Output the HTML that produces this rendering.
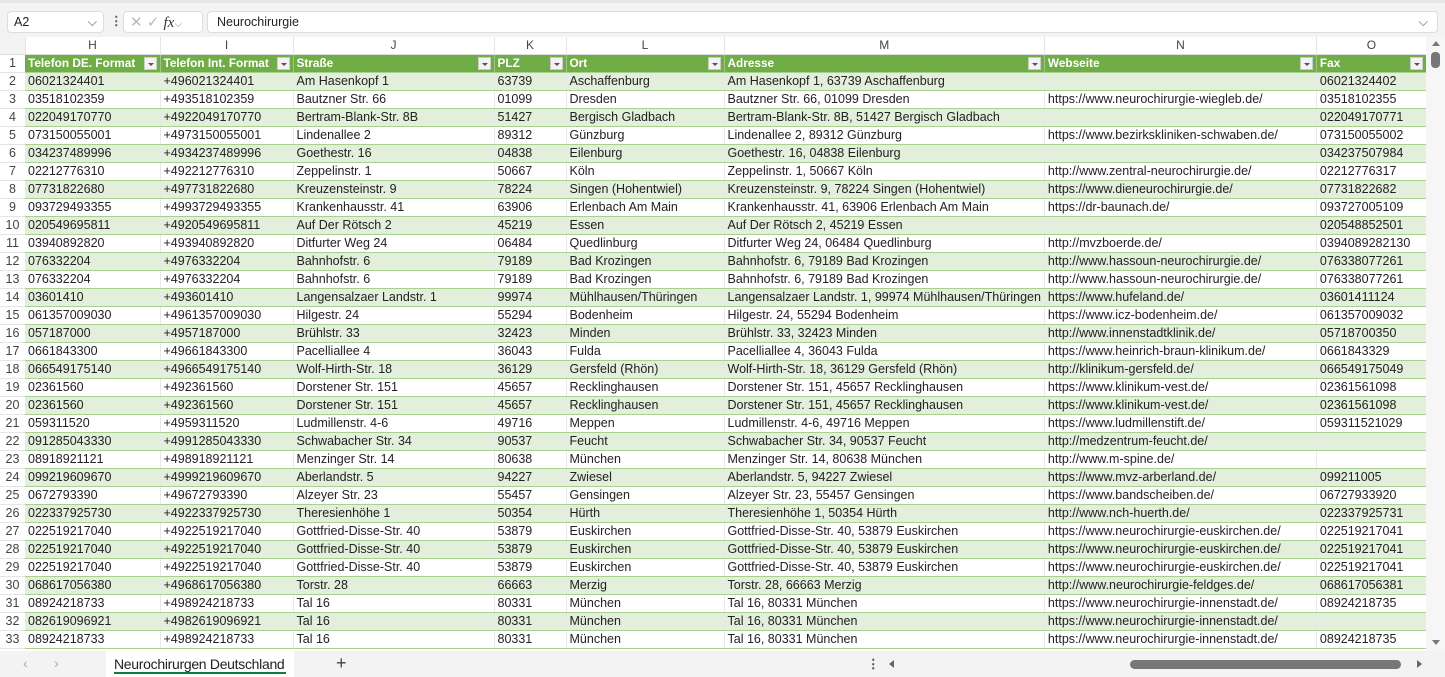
<!DOCTYPE html>
<html><head><meta charset="utf-8"><style>
*{box-sizing:border-box;margin:0;padding:0}
body{width:1445px;height:677px;overflow:hidden;background:#fff;font-family:"Liberation Sans",sans-serif;font-size:12.5px;color:#222;position:relative}
.top{position:absolute;left:0;top:0;width:1445px;height:37px;background:#f3f3f3;border-top:3px solid #e6e6e6}
.nb{position:absolute;left:7px;top:8px;width:97px;height:22px;background:#fff;border:1px solid #ddd;border-radius:4px;padding:3px 6px;font-size:12.5px}
.fx{position:absolute;left:123px;top:8px;width:80px;height:22px;background:#fff;border:1px solid #ddd;border-radius:4px;color:#888;font-size:15px;padding:1px 6px}
.fb{position:absolute;left:207px;top:8px;width:1231px;height:22px;background:#fff;border:1px solid #ddd;border-radius:4px;padding:3px 9px;font-size:12.5px}
table{position:absolute;left:0;top:37px;border-collapse:collapse;table-layout:fixed}
td{height:18px;padding:0 3px;white-space:nowrap;overflow:hidden;border-bottom:1px solid #a9d08e;line-height:17px}
tr.ch td{height:17px;background:#fff;color:#444;text-align:center;border-bottom:1px solid #ddd;border-right:1px solid #e5e5e5;font-size:12px}
td.rh{background:#fff;color:#444;text-align:center;border-bottom:1px solid #e5e5e5;padding:0;font-size:12.5px}
tr.h td:not(.rh){background:#70ad47;color:#fff;font-weight:bold;font-size:11.8px;border-right:1px solid #9cc97e;position:relative}
tr.h td:not(.rh) i{position:absolute;right:3px;top:2px;width:13px;height:13px;background:#f3f3f3;border:1px solid #ccc}
tr.h td:not(.rh) i:after{content:"";position:absolute;left:3px;top:5px;border:3px solid transparent;border-top:3px solid #555}
tr:nth-child(odd):not(.ch) td:not(.rh){background:#e2efda}
td:not(.rh){border-right:1px solid #e8e8e8}
.bot{position:absolute;left:0;top:651px;width:1445px;height:26px;background:#f3f3f3}
.tab{position:absolute;left:106px;top:0;width:188px;height:26px;background:#fff;font-size:14px;padding:5px 8px;color:#222;white-space:nowrap;letter-spacing:-0.3px}
.tab:after{content:"";position:absolute;left:8px;right:8px;bottom:3px;height:2px;background:#107c41}
.vs{position:absolute;left:1426px;top:37px;width:19px;height:614px;background:#f6f6f6}
</style></head><body>
<div class="top"><div class="nb">A2<span style="float:right;color:#555">⌵</span></div>
<div style="position:absolute;left:110px;top:10px;color:#555;font-weight:bold">⋮</div>
<div class="fx"><span style="color:#bbb">✕ ✓</span> <i style="font-family:'Liberation Serif';color:#333">fx</i><span style="font-size:10px">⌵</span></div>
<div class="fb">Neurochirurgie<span style="float:right;color:#555">⌵</span></div></div>
<table>
<colgroup><col style="width:25px"><col style="width:135px"><col style="width:133px"><col style="width:201px"><col style="width:72px"><col style="width:158px"><col style="width:320px"><col style="width:272px"><col style="width:110px"></colgroup>
<tr class="ch"><td style="background:#f3f3f3"></td><td>H</td><td>I</td><td>J</td><td>K</td><td>L</td><td>M</td><td>N</td><td>O</td></tr>
<tr class="h"><td class="rh">1</td><td>Telefon DE. Format<i></i></td><td>Telefon Int. Format<i></i></td><td>Straße<i></i></td><td>PLZ<i></i></td><td>Ort<i></i></td><td>Adresse<i></i></td><td>Webseite<i></i></td><td>Fax<i></i></td></tr>
<tr><td class="rh">2</td><td>06021324401</td><td>+496021324401</td><td>Am Hasenkopf 1</td><td>63739</td><td>Aschaffenburg</td><td>Am Hasenkopf 1, 63739 Aschaffenburg</td><td></td><td>06021324402</td></tr>
<tr><td class="rh">3</td><td>03518102359</td><td>+493518102359</td><td>Bautzner Str. 66</td><td>01099</td><td>Dresden</td><td>Bautzner Str. 66, 01099 Dresden</td><td>https://www.neurochirurgie-wiegleb.de/</td><td>03518102355</td></tr>
<tr><td class="rh">4</td><td>022049170770</td><td>+4922049170770</td><td>Bertram-Blank-Str. 8B</td><td>51427</td><td>Bergisch Gladbach</td><td>Bertram-Blank-Str. 8B, 51427 Bergisch Gladbach</td><td></td><td>022049170771</td></tr>
<tr><td class="rh">5</td><td>073150055001</td><td>+4973150055001</td><td>Lindenallee 2</td><td>89312</td><td>Günzburg</td><td>Lindenallee 2, 89312 Günzburg</td><td>https://www.bezirkskliniken-schwaben.de/</td><td>073150055002</td></tr>
<tr><td class="rh">6</td><td>034237489996</td><td>+4934237489996</td><td>Goethestr. 16</td><td>04838</td><td>Eilenburg</td><td>Goethestr. 16, 04838 Eilenburg</td><td></td><td>034237507984</td></tr>
<tr><td class="rh">7</td><td>02212776310</td><td>+492212776310</td><td>Zeppelinstr. 1</td><td>50667</td><td>Köln</td><td>Zeppelinstr. 1, 50667 Köln</td><td>http://www.zentral-neurochirurgie.de/</td><td>02212776317</td></tr>
<tr><td class="rh">8</td><td>07731822680</td><td>+497731822680</td><td>Kreuzensteinstr. 9</td><td>78224</td><td>Singen (Hohentwiel)</td><td>Kreuzensteinstr. 9, 78224 Singen (Hohentwiel)</td><td>https://www.dieneurochirurgie.de/</td><td>07731822682</td></tr>
<tr><td class="rh">9</td><td>093729493355</td><td>+4993729493355</td><td>Krankenhausstr. 41</td><td>63906</td><td>Erlenbach Am Main</td><td>Krankenhausstr. 41, 63906 Erlenbach Am Main</td><td>https://dr-baunach.de/</td><td>093727005109</td></tr>
<tr><td class="rh">10</td><td>020549695811</td><td>+4920549695811</td><td>Auf Der Rötsch 2</td><td>45219</td><td>Essen</td><td>Auf Der Rötsch 2, 45219 Essen</td><td></td><td>020548852501</td></tr>
<tr><td class="rh">11</td><td>03940892820</td><td>+493940892820</td><td>Ditfurter Weg 24</td><td>06484</td><td>Quedlinburg</td><td>Ditfurter Weg 24, 06484 Quedlinburg</td><td>http://mvzboerde.de/</td><td>0394089282130</td></tr>
<tr><td class="rh">12</td><td>076332204</td><td>+4976332204</td><td>Bahnhofstr. 6</td><td>79189</td><td>Bad Krozingen</td><td>Bahnhofstr. 6, 79189 Bad Krozingen</td><td>http://www.hassoun-neurochirurgie.de/</td><td>076338077261</td></tr>
<tr><td class="rh">13</td><td>076332204</td><td>+4976332204</td><td>Bahnhofstr. 6</td><td>79189</td><td>Bad Krozingen</td><td>Bahnhofstr. 6, 79189 Bad Krozingen</td><td>http://www.hassoun-neurochirurgie.de/</td><td>076338077261</td></tr>
<tr><td class="rh">14</td><td>03601410</td><td>+493601410</td><td>Langensalzaer Landstr. 1</td><td>99974</td><td>Mühlhausen/Thüringen</td><td>Langensalzaer Landstr. 1, 99974 Mühlhausen/Thüringen</td><td>https://www.hufeland.de/</td><td>03601411124</td></tr>
<tr><td class="rh">15</td><td>061357009030</td><td>+4961357009030</td><td>Hilgestr. 24</td><td>55294</td><td>Bodenheim</td><td>Hilgestr. 24, 55294 Bodenheim</td><td>https://www.icz-bodenheim.de/</td><td>061357009032</td></tr>
<tr><td class="rh">16</td><td>057187000</td><td>+4957187000</td><td>Brühlstr. 33</td><td>32423</td><td>Minden</td><td>Brühlstr. 33, 32423 Minden</td><td>http://www.innenstadtklinik.de/</td><td>05718700350</td></tr>
<tr><td class="rh">17</td><td>0661843300</td><td>+49661843300</td><td>Pacelliallee 4</td><td>36043</td><td>Fulda</td><td>Pacelliallee 4, 36043 Fulda</td><td>https://www.heinrich-braun-klinikum.de/</td><td>0661843329</td></tr>
<tr><td class="rh">18</td><td>066549175140</td><td>+4966549175140</td><td>Wolf-Hirth-Str. 18</td><td>36129</td><td>Gersfeld (Rhön)</td><td>Wolf-Hirth-Str. 18, 36129 Gersfeld (Rhön)</td><td>http://klinikum-gersfeld.de/</td><td>066549175049</td></tr>
<tr><td class="rh">19</td><td>02361560</td><td>+492361560</td><td>Dorstener Str. 151</td><td>45657</td><td>Recklinghausen</td><td>Dorstener Str. 151, 45657 Recklinghausen</td><td>https://www.klinikum-vest.de/</td><td>02361561098</td></tr>
<tr><td class="rh">20</td><td>02361560</td><td>+492361560</td><td>Dorstener Str. 151</td><td>45657</td><td>Recklinghausen</td><td>Dorstener Str. 151, 45657 Recklinghausen</td><td>https://www.klinikum-vest.de/</td><td>02361561098</td></tr>
<tr><td class="rh">21</td><td>059311520</td><td>+4959311520</td><td>Ludmillenstr. 4-6</td><td>49716</td><td>Meppen</td><td>Ludmillenstr. 4-6, 49716 Meppen</td><td>https://www.ludmillenstift.de/</td><td>059311521029</td></tr>
<tr><td class="rh">22</td><td>091285043330</td><td>+4991285043330</td><td>Schwabacher Str. 34</td><td>90537</td><td>Feucht</td><td>Schwabacher Str. 34, 90537 Feucht</td><td>http://medzentrum-feucht.de/</td><td></td></tr>
<tr><td class="rh">23</td><td>08918921121</td><td>+498918921121</td><td>Menzinger Str. 14</td><td>80638</td><td>München</td><td>Menzinger Str. 14, 80638 München</td><td>http://www.m-spine.de/</td><td></td></tr>
<tr><td class="rh">24</td><td>099219609670</td><td>+4999219609670</td><td>Aberlandstr. 5</td><td>94227</td><td>Zwiesel</td><td>Aberlandstr. 5, 94227 Zwiesel</td><td>https://www.mvz-arberland.de/</td><td>099211005</td></tr>
<tr><td class="rh">25</td><td>0672793390</td><td>+49672793390</td><td>Alzeyer Str. 23</td><td>55457</td><td>Gensingen</td><td>Alzeyer Str. 23, 55457 Gensingen</td><td>https://www.bandscheiben.de/</td><td>06727933920</td></tr>
<tr><td class="rh">26</td><td>022337925730</td><td>+4922337925730</td><td>Theresienhöhe 1</td><td>50354</td><td>Hürth</td><td>Theresienhöhe 1, 50354 Hürth</td><td>http://www.nch-huerth.de/</td><td>022337925731</td></tr>
<tr><td class="rh">27</td><td>022519217040</td><td>+4922519217040</td><td>Gottfried-Disse-Str. 40</td><td>53879</td><td>Euskirchen</td><td>Gottfried-Disse-Str. 40, 53879 Euskirchen</td><td>https://www.neurochirurgie-euskirchen.de/</td><td>022519217041</td></tr>
<tr><td class="rh">28</td><td>022519217040</td><td>+4922519217040</td><td>Gottfried-Disse-Str. 40</td><td>53879</td><td>Euskirchen</td><td>Gottfried-Disse-Str. 40, 53879 Euskirchen</td><td>https://www.neurochirurgie-euskirchen.de/</td><td>022519217041</td></tr>
<tr><td class="rh">29</td><td>022519217040</td><td>+4922519217040</td><td>Gottfried-Disse-Str. 40</td><td>53879</td><td>Euskirchen</td><td>Gottfried-Disse-Str. 40, 53879 Euskirchen</td><td>https://www.neurochirurgie-euskirchen.de/</td><td>022519217041</td></tr>
<tr><td class="rh">30</td><td>068617056380</td><td>+4968617056380</td><td>Torstr. 28</td><td>66663</td><td>Merzig</td><td>Torstr. 28, 66663 Merzig</td><td>http://www.neurochirurgie-feldges.de/</td><td>068617056381</td></tr>
<tr><td class="rh">31</td><td>08924218733</td><td>+498924218733</td><td>Tal 16</td><td>80331</td><td>München</td><td>Tal 16, 80331 München</td><td>https://www.neurochirurgie-innenstadt.de/</td><td>08924218735</td></tr>
<tr><td class="rh">32</td><td>082619096921</td><td>+4982619096921</td><td>Tal 16</td><td>80331</td><td>München</td><td>Tal 16, 80331 München</td><td>https://www.neurochirurgie-innenstadt.de/</td><td></td></tr>
<tr><td class="rh">33</td><td>08924218733</td><td>+498924218733</td><td>Tal 16</td><td>80331</td><td>München</td><td>Tal 16, 80331 München</td><td>https://www.neurochirurgie-innenstadt.de/</td><td>08924218735</td></tr>
</table>
<div class="vs"><div style="position:absolute;left:6px;top:4px;border:4px solid transparent;border-bottom:5px solid #777;border-top:0"></div><div style="position:absolute;left:5px;top:15px;width:9px;height:16px;border-radius:4px;background:#777"></div><div style="position:absolute;left:6px;top:603px;border:4px solid transparent;border-top:5px solid #777;border-bottom:0"></div></div>
<div class="bot">
<span style="position:absolute;left:23px;top:4px;color:#aaa;font-size:14px">‹</span><span style="position:absolute;left:54px;top:4px;color:#aaa;font-size:14px">›</span>
<div class="tab">Neurochirurgen Deutschland</div>
<span style="position:absolute;left:336px;top:2px;color:#444;font-size:18px">+</span>
<span style="position:absolute;left:867px;top:5px;color:#444;font-weight:bold">⋮</span>
<div style="position:absolute;left:889px;top:9px;border:4px solid transparent;border-right:5px solid #666;border-left:0"></div>
<div style="position:absolute;left:1130px;top:9px;width:271px;height:9px;border-radius:5px;background:#777"></div>
<div style="position:absolute;left:1417px;top:9px;border:4px solid transparent;border-left:5px solid #666;border-right:0"></div>
</div>
</body></html>
